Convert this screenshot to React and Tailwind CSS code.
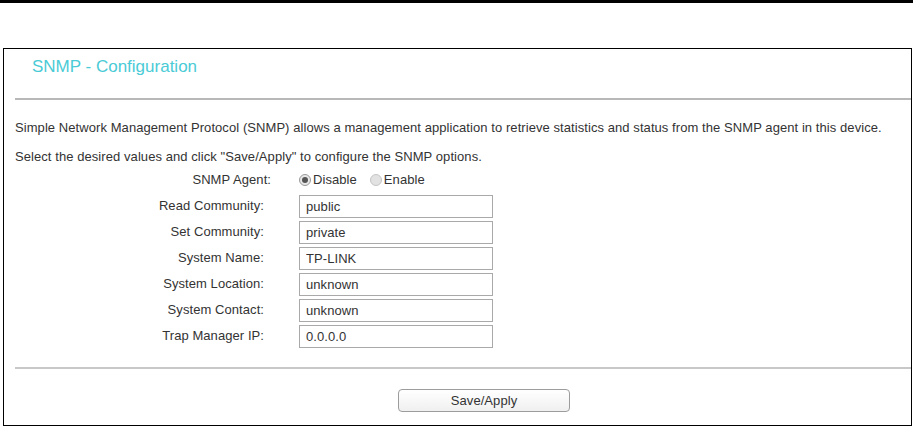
const fields = [
  { label: "Read Community:", value: "public" },
  { label: "Set Community:", value: "private" },
  { label: "System Name:", value: "TP-LINK" },
  { label: "System Location:", value: "unknown" },
  { label: "System Contact:", value: "unknown" },
  { label: "Trap Manager IP:", value: "0.0.0.0" },
];

function Radio({ checked, label }) {
  return (
    <label className="flex items-center">
      <span
        className={`flex h-[12px] w-[12px] items-center justify-center rounded-full border ${
          checked ? "border-[#9a9a9a] bg-[#e8e8e8]" : "border-[#c4c4c4] bg-[#e2e2e2]"
        }`}
      >
        {checked ? <span className="h-[6px] w-[6px] rounded-full bg-[#555]" /> : null}
      </span>
      <span className="ml-[2px]">{label}</span>
    </label>
  );
}

export default function App() {
  return (
    <div className="h-[426px] w-[913px] overflow-hidden bg-white font-['Liberation_Sans',Arial,sans-serif] text-[13px] tracking-[0.07px] text-[#333]">
      <div className="h-[3px] bg-black" />

      <div className="ml-[3px] mt-[45px] h-[378px] w-[909px] border border-black">
        <h1 className="pl-[28px] pt-[8px] text-[17px] font-normal leading-[20px] tracking-normal text-[#4acbd6]">
          SNMP - Configuration
        </h1>

        <div className="ml-[11px] mt-[21px] h-[2px] bg-[#b8b8b8]" />

        <p className="mt-[18px] pl-[11px] leading-[20px]">
          Simple Network Management Protocol (SNMP) allows a management application to retrieve
          statistics and status from the SNMP agent in this device.
        </p>
        <p className="mt-[9px] pl-[11px] leading-[20px]">
          Select the desired values and click "Save/Apply" to configure the SNMP options.
        </p>

        <div className="mt-[3px] flex h-[20px] items-center">
          <div className="w-[267px] text-right">SNMP Agent:</div>
          <div className="ml-[28px] flex items-center gap-[13px]">
            <Radio checked label="Disable" />
            <Radio label="Enable" />
          </div>
        </div>

        <div className="mt-[3px]">
          {fields.map((field) => (
            <div key={field.label} className="flex h-[26px] items-center">
              <div className="w-[260px] text-right">{field.label}</div>
              <input
                className="ml-[35px] h-[23px] w-[194px] border border-[#a9a9a9] px-[6px] text-[13px] tracking-[0.07px] text-[#333] outline-none"
                defaultValue={field.value}
                type="text"
              />
            </div>
          ))}
        </div>

        <div className="ml-[11px] mt-[18px] h-[2px] bg-[#c8c8c8]" />

        <div className="mt-[20px] flex">
          <button
            className="ml-[394px] h-[23px] w-[172px] rounded-[4px] border border-[#9c9c9c] bg-gradient-to-b from-white to-[#f0f0f0] text-[13px] tracking-[0.07px] text-[#333]"
            type="button"
          >
            Save/Apply
          </button>
        </div>
      </div>
    </div>
  );
}
